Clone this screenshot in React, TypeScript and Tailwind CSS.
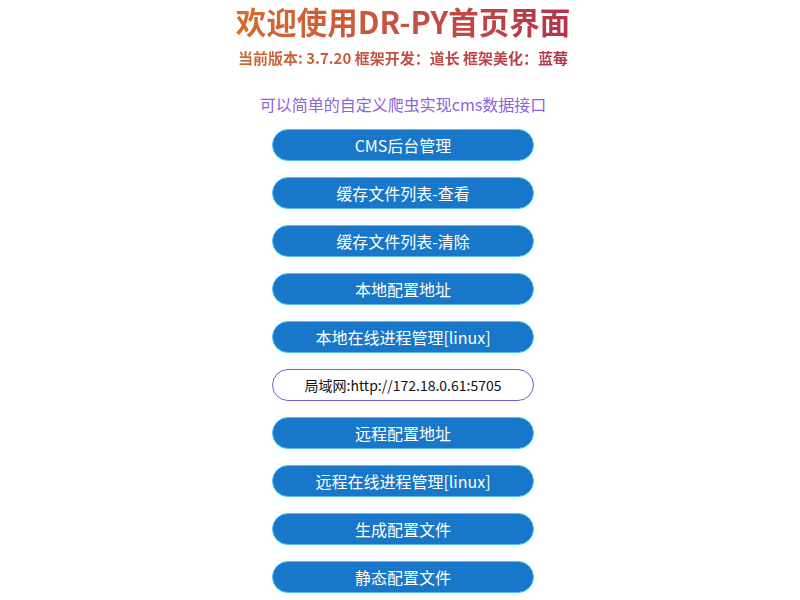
const links = [
  "CMS后台管理",
  "缓存文件列表-查看",
  "缓存文件列表-清除",
  "本地配置地址",
  "本地在线进程管理[linux]",
];

const links2 = [
  "远程配置地址",
  "远程在线进程管理[linux]",
  "生成配置文件",
  "静态配置文件",
];

function NavButton({ label }: { label: string }) {
  return (
    <a className="flex h-[32px] w-[262px] items-center justify-center rounded-full border border-[#4cc2f5] bg-[#1877c9] text-[16px] text-white">
      {label}
    </a>
  );
}

export default function App() {
  return (
    <div
      className="flex min-h-[600px] flex-col items-center bg-white pl-[6px] pt-[1px]"
      style={{ fontFamily: '"Noto Sans CJK SC", "Noto Sans", sans-serif' }}
    >
      <h1 className="bg-gradient-to-r from-[#d86c28] to-[#b3344c] bg-clip-text px-1 text-[30.5px] font-bold leading-[40px] text-transparent">
        欢迎使用DR-PY首页界面
      </h1>
      <p className="mt-[7px] bg-gradient-to-r from-[#d0652c] to-[#b3344c] bg-clip-text text-[15px] font-bold leading-[20px] text-transparent">
        当前版本: 3.7.20 框架开发：道长 框架美化：蓝莓
      </p>
      <p className="mt-[26px] text-[16px] leading-[20px] text-[#8b63dc]">
        可以简单的自定义爬虫实现cms数据接口
      </p>
      <div className="mt-[15px] flex flex-col gap-[16px]">
        {links.map((l) => (
          <NavButton key={l} label={l} />
        ))}
        <div className="flex h-[32px] w-[262px] items-center justify-center rounded-full border border-[#6b5fd3] bg-white text-[14px] text-[#111]">
          局域网:http://172.18.0.61:5705
        </div>
        {links2.map((l) => (
          <NavButton key={l} label={l} />
        ))}
      </div>
    </div>
  );
}
